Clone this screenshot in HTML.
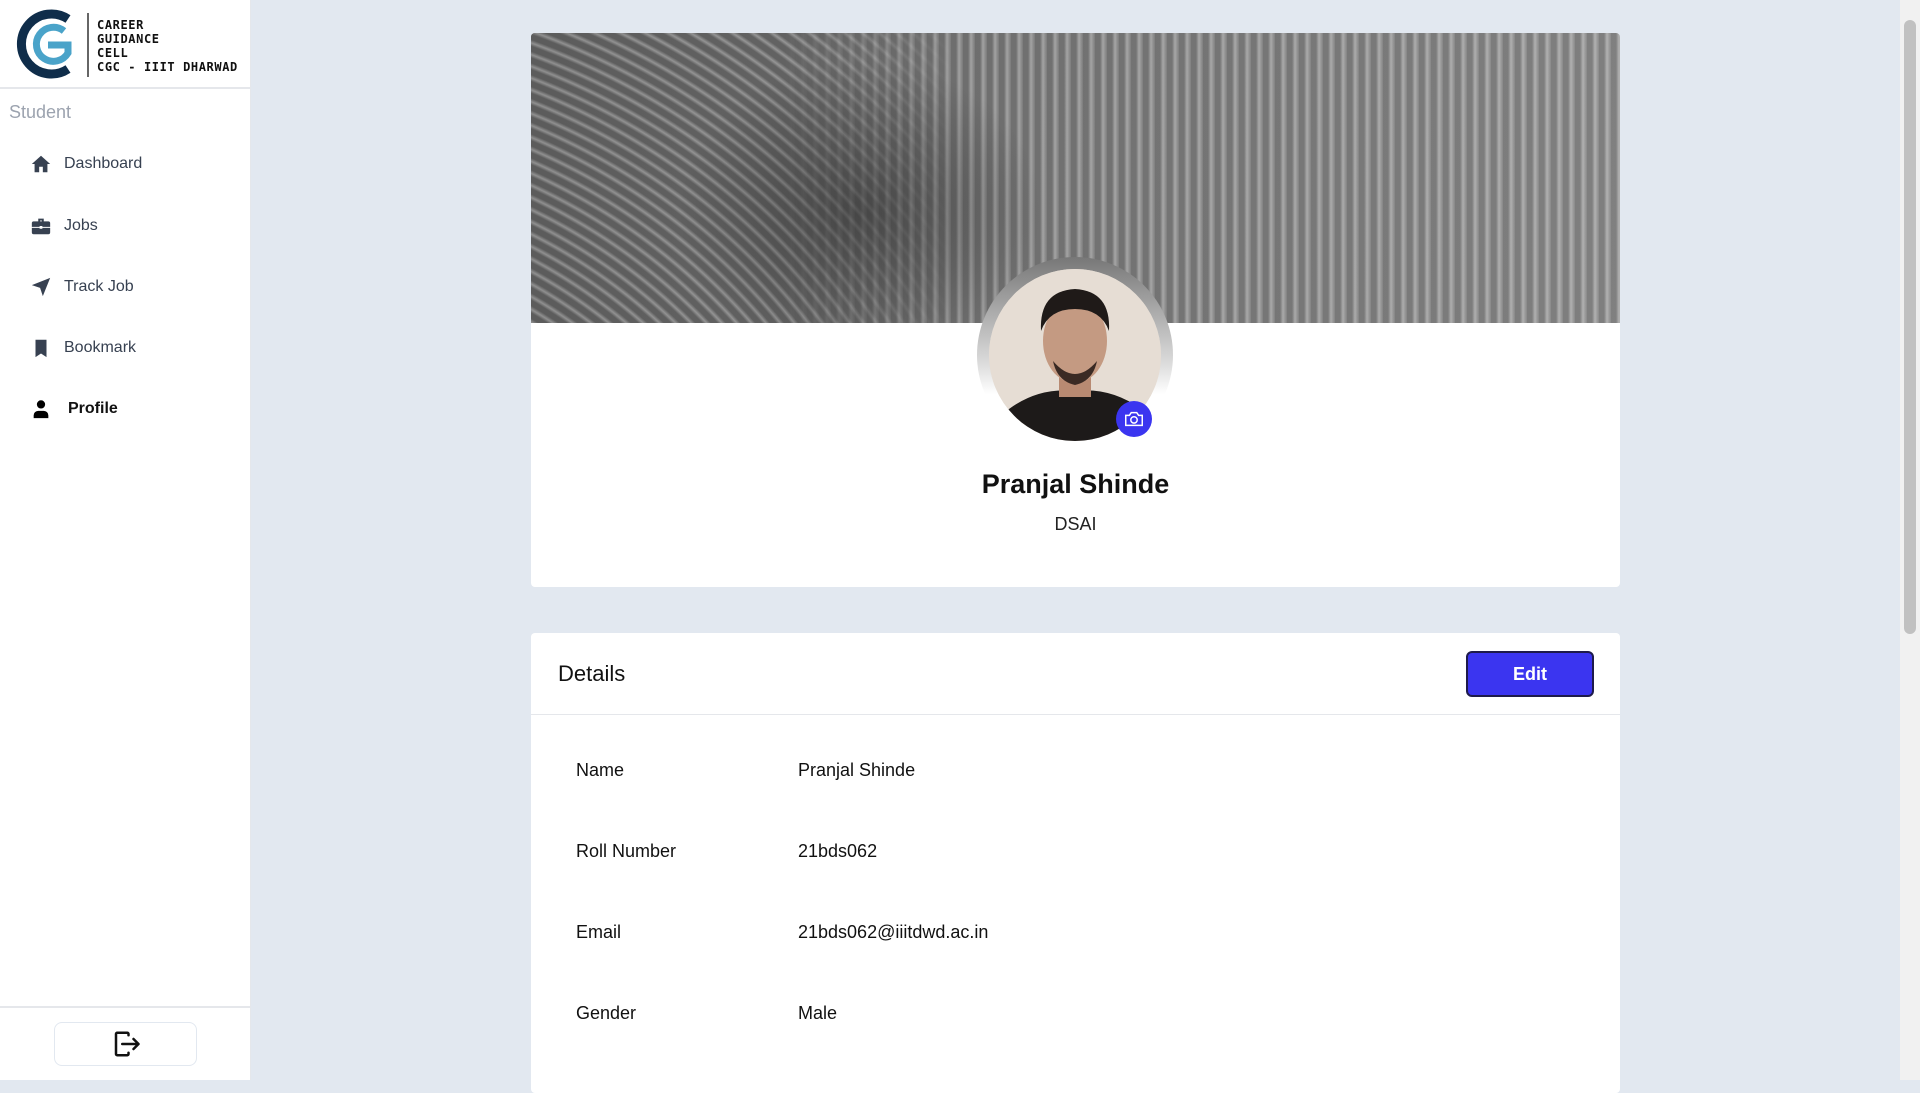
<!DOCTYPE html>
<html><head><meta charset="utf-8"><style>
*{box-sizing:border-box;margin:0;padding:0}
body{width:1920px;height:1080px;overflow:hidden;background:#e2e8f0;font-family:"Liberation Sans",sans-serif;position:relative}
.side{position:absolute;left:0;top:0;width:251px;height:1080px;background:#fff;border-right:1px solid #e5e7eb}
.logo{height:89px;border-bottom:2px solid #e5e7eb;position:relative}
.lt{position:absolute;left:97px;top:18px;font:bold 12px/14px "DejaVu Sans Mono","Liberation Mono",monospace;color:#111;letter-spacing:0.6px;white-space:nowrap}
.vl{position:absolute;left:87px;top:13px;width:2px;height:64px;background:#666}
.stu{position:absolute;left:9px;top:102px;font-size:18px;color:#9ca3af}
.nav{position:absolute;left:30px;font-size:16px;color:#374151;display:flex;align-items:center}
.nav svg{width:22px;height:22px;margin-right:12px}
.bot{position:absolute;left:0;top:1006px;width:251px;border-top:2px solid #e5e7eb}
.lo{position:absolute;left:54px;top:1022px;width:143px;height:44px;border:1px solid #e2e8f0;border-radius:8px;display:flex;align-items:center;justify-content:center}
.card{position:absolute;left:531px;width:1089px;background:#fff;border-radius:4px}
.banner{position:absolute;left:0;top:0;width:1089px;height:290px;border-radius:4px 4px 0 0;overflow:hidden;
background:repeating-linear-gradient(90deg,#6e6e6e 0 5px,#a8a8a8 8px,#7a7a7a 12px),linear-gradient(90deg,#777,#999)}
.curv{position:absolute;left:0;top:0;width:420px;height:290px;background:repeating-radial-gradient(circle at -250px 700px,#666 0 5px,#a0a0a0 8px,#6a6a6a 11px);
-webkit-mask-image:linear-gradient(90deg,#000 60%,transparent);mask-image:linear-gradient(90deg,#000 60%,transparent)}
.banner:after{content:"";position:absolute;inset:0;background:radial-gradient(ellipse 260px 220px at 330px 180px,rgba(30,30,30,.45),rgba(0,0,0,0) 70%),linear-gradient(90deg,rgba(0,0,0,.1),rgba(255,255,255,.12))}
.ring{position:absolute;left:446px;top:224px;width:196px;height:196px;border-radius:50%;background:linear-gradient(#777,#ddd 55%,#fff 70%)}
.av{position:absolute;left:458px;top:236px;width:172px;height:172px;border-radius:50%;overflow:hidden;background:#e4dcd4}
.cam{position:absolute;left:585px;top:368px;width:36px;height:36px;border-radius:50%;background:#3b35f0;display:flex;align-items:center;justify-content:center}
.row{position:absolute;font-size:18px;color:#111}
</style></head><body>
<div class="side">
 <div class="logo">
  <svg style="position:absolute;left:16px;top:9px" width="64" height="70" viewBox="0 0 64 70">
   <path d="M52 10 A30 30 0 1 0 52 60" fill="none" stroke="#0f2d4a" stroke-width="9"/>
   <path d="M48 22 A17 17 0 1 0 52 44 L52 36 L32 36" fill="none" stroke="#4aa3c9" stroke-width="7"/>
  </svg>
  <div class="vl"></div>
  <div class="lt">CAREER<br>GUIDANCE<br>CELL<br>CGC - IIIT DHARWAD</div>
 </div>
 <div class="stu">Student</div>
 <div class="nav" style="top:153px"><svg viewBox="0 0 24 24"><path d="M12 3 2 12h3v9h5v-6h4v6h5v-9h3z" fill="#374151"/></svg>Dashboard</div>
 <div class="nav" style="top:215px"><svg viewBox="0 0 24 24"><path d="M9 4h6v3h5a2 2 0 0 1 2 2v4H2V9a2 2 0 0 1 2-2h5zm2 2v1h2V6zM2 14h20v5a2 2 0 0 1-2 2H4a2 2 0 0 1-2-2z" fill="#374151"/><rect x="10.5" y="12" width="3" height="3" fill="#fff"/></svg>Jobs</div>
 <div class="nav" style="top:276px"><svg viewBox="0 0 24 24"><path d="M22 2 2 10l9 3 3 9z" fill="#374151"/></svg>Track Job</div>
 <div class="nav" style="top:337px"><svg viewBox="0 0 24 24"><path d="M6 3h12v19l-6-4-6 4z" fill="#374151"/></svg>Bookmark</div>
 <div class="nav" style="top:398px;color:#111;font-weight:600"><svg viewBox="0 0 24 24" style="margin-right:16px"><circle cx="12" cy="7" r="4.5" fill="#000"/><path d="M4 22v-3a5 5 0 0 1 5-5h6a5 5 0 0 1 5 5v3z" fill="#000"/></svg>Profile</div>
 <div class="bot"></div>
 <div class="lo"><svg width="30" height="30" viewBox="0 0 24 24" fill="none" stroke="#111" stroke-width="2" stroke-linecap="round" stroke-linejoin="round"><path d="M14 5V4a1 1 0 0 0-1-1H5a1 1 0 0 0-1 1v16a1 1 0 0 0 1 1h8a1 1 0 0 0 1-1v-1"/><path d="M9 12h12M18 8l4 4-4 4"/></svg></div>
</div>
<div class="card" style="top:33px;height:554px">
 <div class="banner"><div class="curv"></div></div>
 <div class="ring"></div>
 <div class="av">
  <svg width="172" height="172" viewBox="0 0 172 172">
   <rect width="172" height="172" fill="#e6ddd4"/>
   <path d="M0 172 L20 140 Q50 118 86 122 Q122 118 152 140 L172 172z" fill="#1d1a19"/>
   <rect x="70" y="100" width="32" height="28" fill="#b88a72"/>
   <ellipse cx="86" cy="72" rx="32" ry="42" fill="#c49a82"/>
   <path d="M52 62 Q50 22 86 20 Q122 22 120 62 Q112 40 86 40 Q60 40 52 62z" fill="#1f1a18"/>
   <path d="M64 92 Q86 118 108 92 Q104 112 86 116 Q68 112 64 92z" fill="#3a2a24"/>
  </svg>
 </div>
 <div class="cam"><svg width="22" height="22" viewBox="0 0 24 24" fill="none" stroke="#fff" stroke-width="1.6"><path d="M3 8h4l2-3h6l2 3h4v11H3z"/><circle cx="12" cy="13" r="3.5"/></svg></div>
 <div style="position:absolute;left:0;width:1089px;top:436px;text-align:center;font-size:27px;font-weight:600;color:#111">Pranjal Shinde</div>
 <div style="position:absolute;left:0;width:1089px;top:481px;text-align:center;font-size:18px;color:#222">DSAI</div>
</div>
<div class="card" style="top:633px;height:460px">
 <div style="height:82px;border-bottom:1px solid #e5e7eb;position:relative">
  <div style="position:absolute;left:27px;top:28px;font-size:22px;color:#111">Details</div>
  <div style="position:absolute;left:935px;top:18px;width:128px;height:46px;background:#3b35f0;border:2px solid #1e1b4b;border-radius:6px;color:#fff;font-size:18px;font-weight:600;display:flex;align-items:center;justify-content:center">Edit</div>
 </div>
</div>
<div class="row" style="left:576px;top:760px">Name</div><div class="row" style="left:798px;top:760px">Pranjal Shinde</div>
<div class="row" style="left:576px;top:841px">Roll Number</div><div class="row" style="left:798px;top:841px">21bds062</div>
<div class="row" style="left:576px;top:922px">Email</div><div class="row" style="left:798px;top:922px">21bds062@iiitdwd.ac.in</div>
<div class="row" style="left:576px;top:1003px">Gender</div><div class="row" style="left:798px;top:1003px">Male</div>
<div style="position:absolute;left:1900px;top:0;width:20px;height:1080px;background:#f1f1f1">
 <div style="position:absolute;left:4px;top:20px;width:12px;height:614px;background:#c1c1c1;border-radius:6px"></div>
</div>
</body></html>
